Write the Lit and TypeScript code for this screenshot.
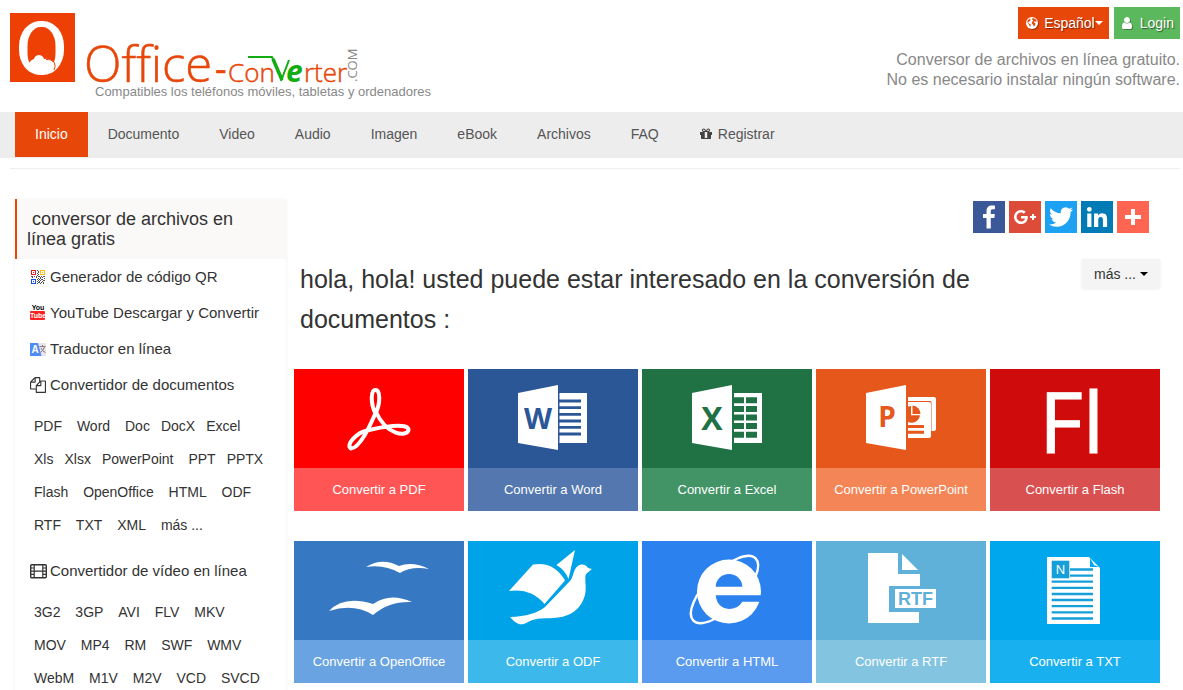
import { LitElement, html, svg, css } from "lit";
import { customElement } from "lit/decorators.js";

const doorShape = "M50 24 L90 16 V81 L50 74 Z";

const art = {
  pdf: svg`<g fill="none" stroke="#fff" stroke-linejoin="round">
      <path stroke-width="4" d="M81.500 45C76 33 77 21 81.500 21S87 33 81.500 45" />
      <path stroke-width="4" d="M82 43C76 57 66 79 57 79.500C51 76 63 63.500 73 61.500C86 58 115 53 114.500 61C113 68 93 67 82 43" />
    </g>`,
  word: svg`<path fill="#fff" d=${doorShape} /><path fill="#fff" d="M91.500 24H119V74H91.500Z" />
    <path stroke="#2b5797" stroke-width="2.800" d="M91 32H113M91 38.700H113M91 45.300H113M91 52H113M91 58.400H113M91 65H113" />
    <text class="letter" x="70" y="60" font-size="29" fill="#2b5797">W</text>`,
  excel: svg`<path fill="#fff" d=${doorShape} /><path fill="#fff" d="M92 24H120V74H92Z" />
    <path stroke="#207245" stroke-width="6" d="M92 31.300H102M104 31.300H115M92 40H102M104 40H115M92 48.500H102M104 48.500H115M92 57H102M104 57H115M92 65.700H102M104 65.700H115" />
    <text class="letter" x="70" y="61" font-size="32" fill="#207245">X</text>`,
  ppt: svg`<path fill="#fff" d=${doorShape} />
    <path fill="#fff" d="M92 28H118Q120 28 120 30V60Q120 62 118 62H115.500V33.500Q115.500 32 114 32H92Z" />
    <path fill="#fff" d="M92 33H113Q115 33 115 35V67Q115 69 113 69H92Z" />
    <path fill="#e6571b" d="M92 37.500A8.500 8.500 0 0 1 95 37V46.300H104A8.500 8.500 0 0 1 92 53Z" />
    <path fill="#e6571b" d="M96.500 36.500A8.500 8.500 0 0 1 104.500 45H96.500Z" />
    <path stroke="#e6571b" stroke-width="3" d="M92 57.500H108M92 63.200H108" />
    <text class="letter" x="71" y="58" font-size="28" fill="#e6571b">P</text>`,
  flash: svg`<text x="49" y="84" font-family="Open Sans, sans-serif" font-size="85" stroke="#fff" fill="#fff">Fl</text>`,
  oo: svg`<path fill="#fff" d="M72 26Q88 16 105 25Q119 20 135 28Q117 25 106 32Q90 23 72 26Z" />
    <path fill="#fff" d="M35 70Q50 54 79 63Q96 51 118 61Q95 60 79 74Q60 62 35 70Z" />`,
  odf: svg`<g fill="#fff"><path d="M41 50L65 23.500Q86 20 97 39.500L76.500 63Q63 47 41 50Z" />
    <path d="M88.500 24L107 9L100.500 38Q97 29 88.500 24Z" />
    <path d="M42 76Q66 75 77 66L102 40C106 36 105 25 113 23.500Q118 23 120 27L124 28L118 33C116 38 119 45 117 54C113 68 103 75 90 76.500C78 78 68 76 60 81C53 85 49 84 42 76Z" /></g>`,
  ie: svg`<circle cx="87" cy="50.500" r="32" fill="#fff" />
    <ellipse cx="82.500" cy="48.500" rx="44" ry="18" transform="rotate(-45 82.500 48.500)" fill="none" stroke="#fff" stroke-width="2.400" />
    <path fill="#2b82ee" d="M73.700 45.700A13.300 12.700 0 0 1 100.300 45.700Z" />
    <path fill="#2b82ee" d="M73.700 54.300H122V60.700H100.300Q96 68 87 68Q75 67 73.700 54.300Z" />`,
  rtf: svg`<path fill="#fff" d="M52 12H82V33H104V45H73V71H103V82H52Z" /><path fill="#fff" d="M86 13V29H102Z" />
    <path fill="#fff" d="M79 48H120V67H79Z" />
    <text x="99.500" y="64" text-anchor="middle" font-weight="700" font-size="18" font-family="Liberation Sans, sans-serif" fill="#5fb1da">RTF</text>`,
  txt: svg`<path fill="#fff" d="M57 16H99L110 27V83H57Z" /><path fill="#00a7ed" d="M100 17V26H109L104 24Z" />
    <path fill="#169fd8" d="M61.700 19.700H79.300V37.300H61.700Z" />
    <path stroke="#169fd8" stroke-width="2.300" d="M80 28.500H103M80 34.700H103M61.700 40.700H103M61.700 46.800H103M61.700 53H103M61.700 59H103M61.700 65.200H103M61.700 71.300H103M61.700 77.500H103" />
    <text x="70.500" y="33" text-anchor="middle" font-family="Liberation Sans, sans-serif" font-size="13" fill="#fff">N</text>`,
};

const tiles = [
  { name: "PDF", top: "#ff0000", foot: "#ff5555", art: art.pdf },
  { name: "Word", top: "#2b5797", foot: "#5377ae", art: art.word },
  { name: "Excel", top: "#207245", foot: "#429467", art: art.excel },
  { name: "PowerPoint", top: "#e6571b", foot: "#f48556", art: art.ppt },
  { name: "Flash", top: "#cf0b0b", foot: "#d95050", art: art.flash },
  { name: "OpenOffice", top: "#3778c2", foot: "#69a3e2", art: art.oo },
  { name: "ODF", top: "#00a3e7", foot: "#3cb8ea", art: art.odf },
  { name: "HTML", top: "#2b82ee", foot: "#5a9bf0", art: art.ie },
  { name: "RTF", top: "#5fb1da", foot: "#83c4e1", art: art.rtf },
  { name: "TXT", top: "#00a7ed", foot: "#19b0f0", art: art.txt },
];

const social = [
  { name: "Facebook", color: "#3b5998", d: "M17.78 27.5V17.008h3.522l.527-4.09h-4.05v-2.61c0-1.182.33-1.99 2.023-1.99h2.166V4.66c-.375-.05-1.66-.16-3.155-.16-3.123 0-5.26 1.905-5.26 5.405v3.016h-3.53v4.09h3.53V27.5h4.223z" },
  { name: "Google+", color: "#dd4b39", d: "M27 15h-2v-2h-2v2h-2v2h2v2h2v-2h2m-15-2v2.4h3.97c-.16 1.03-1.2 3.02-3.97 3.02-2.39 0-4.34-1.98-4.34-4.42s1.95-4.42 4.34-4.42c1.36 0 2.27.58 2.79 1.08l1.9-1.83C15.47 9.69 13.89 9 12 9c-3.87 0-7 3.13-7 7s3.13 7 7 7c4.04 0 6.72-2.84 6.72-6.84 0-.46-.05-.81-.11-1.16H12z" },
  { name: "Twitter", color: "#1da1f2", d: "M28 8.557a9.913 9.913 0 0 1-2.828.775 4.93 4.93 0 0 0 2.166-2.725 9.738 9.738 0 0 1-3.13 1.194 4.92 4.92 0 0 0-3.593-1.55 4.924 4.924 0 0 0-4.794 6.049c-4.09-.21-7.72-2.17-10.15-5.15a4.942 4.942 0 0 0-.665 2.477c0 1.71.87 3.214 2.19 4.1a4.968 4.968 0 0 1-2.23-.616v.06c0 2.39 1.7 4.38 3.952 4.83-.414.115-.85.174-1.297.174-.318 0-.626-.03-.928-.086a4.935 4.935 0 0 0 4.6 3.42 9.893 9.893 0 0 1-6.114 2.107c-.398 0-.79-.023-1.175-.068a13.953 13.953 0 0 0 7.55 2.213c9.056 0 14.01-7.507 14.01-14.013 0-.213-.005-.426-.015-.637.96-.695 1.795-1.56 2.455-2.55z" },
  { name: "LinkedIn", color: "#007bb5", d: "M6.227 12.61h4.19v13.48h-4.19V12.61zm2.095-6.7a2.43 2.43 0 0 1 0 4.86c-1.344 0-2.428-1.09-2.428-2.43s1.084-2.43 2.428-2.43m4.72 6.7h4.02v1.84h.058c.56-1.058 1.927-2.176 3.965-2.176 4.238 0 5.02 2.792 5.02 6.42v7.395h-4.183v-6.56c0-1.564-.03-3.574-2.178-3.574-2.18 0-2.514 1.7-2.514 3.46v6.668h-4.187V12.61z" },
  { name: "Compartir", color: "#ff6550", d: "M14 8h4v6h6v4h-6v6h-4v-6H8v-4h6z" },
];

const icons = {
  globe: svg`<svg class="glyph" width="12" height="12" viewBox="0 0 12 12" aria-hidden="true"><circle cx="6" cy="6" r="6" fill="#fff" />
    <path fill="#e8470a" d="M6.500 1L9 1.800L10.800 4L10 5L8.800 4.300L7.500 5L9.500 6.500L9 8.500L7.800 9.500L7 7.500L5.800 6.500L6.300 4.500L7.500 3.500L6.200 2.800ZM2 3L4 1.500L4.500 3L3.500 4.500L2 5L3 6.500L4.800 7.500L4.500 9.500L3.500 9L2.800 7L1.200 5Z" /></svg>`,
  user: svg`<svg class="glyph" width="14" height="14" viewBox="0 0 1792 1792" fill="#fff" aria-hidden="true"><path d="M1536 1399q0 109-62.5 187t-150.5 78h-854q-88 0-150.5-78t-62.5-187q0-85 8.5-160.5t31.5-152 58.5-131 94-89 134.5-34.5q131 128 313 128t313-128q76 0 134.5 34.5t94 89 58.5 131 31.5 152 8.500 160.500zm-256-887q0 159-112.500 271.500t-271.500 112.500-271.500-112.500-112.500-271.500 112.500-271.500 271.500-112.500 271.500 112.500 112.500 271.500z" /></svg>`,
  gift: svg`<svg width="14" height="14" viewBox="0 0 1792 1792" fill="#444" aria-hidden="true"><path d="M1056 1356v-716h-320v716q0 25 18 38.500t46 13.500h192q28 0 46-13.500t18-38.500zm-456-844h195l-126-161q-26-31-69-31-40 0-68 28t-28 68 28 68 68 28zm688-96q0-40-28-68t-68-28q-43 0-69 31l-125 161h194q40 0 68-28t28-68zm376 256v320q0 14-9 23t-23 9h-96v416q0 40-28 68t-68 28h-1088q-40 0-68-28t-28-68v-416h-96q-14 0-23-9t-9-23v-320q0-14 9-23t23-9h440q-93 0-158.500-65.500t-65.500-158.500 65.500-158.500 158.500-65.500q107 0 168 77l128 165 128-165q61-77 168-77 93 0 158.500 65.500t65.500 158.500-65.500 158.500-158.500 65.500h440q14 0 23 9t9 23z" /></svg>`,
  qr: svg`<svg width="16" height="16" viewBox="0 0 16 16" shape-rendering="crispEdges" aria-hidden="true">
    <path fill-rule="evenodd" fill="#e01b1b" d="M1 1h5v5h-5zM2 2v3h3v-3zM3 3h1v1h-1z" />
    <path fill-rule="evenodd" fill="#fcbf0a" d="M10 1h5v5h-5zM11 2v3h3v-3zM12 3h1v1h-1z" />
    <path fill-rule="evenodd" fill="#1553f0" d="M1 10h5v5h-5zM2 11v3h3v-3zM3 12h1v1h-1z" />
    <path fill="#555" d="M7 1h1v1h-1zM8 2h1v2h-1zM7 4h1v1h-1zM8 5h1v1h-1zM7 6h1v1h-1zM1 7h2v1h-2zM4 7h1v1h-1zM6 7h1v2h-1zM8 7h2v1h-2zM11 7h1v1h-1zM13 7h2v1h-2zM2 8h1v1h-1zM8 9h1v1h-1zM10 8h1v2h-1zM12 8h1v1h-1zM14 9h1v1h-1zM7 10h1v1h-1zM9 10h1v1h-1zM11 10h2v1h-2zM8 11h1v1h-1zM10 11h1v1h-1zM13 11h2v1h-2zM7 12h1v1h-1zM9 12h1v1h-1zM12 12h1v1h-1zM8 13h2v1h-2zM11 13h1v1h-1zM13 13h1v2h-1zM7 14h1v1h-1zM10 14h1v1h-1z" /></svg>`,
  youtube: svg`<svg width="16" height="16" viewBox="0 0 16 16" aria-hidden="true">
    <path fill="#f22" d="M0 7Q0 6 1 6H14Q15 6 15 7V14Q15 15 14 15H1Q0 15 0 14Z" />
    <text x="8" y="5" text-anchor="middle" font-family="Liberation Sans, sans-serif" font-weight="700" font-size="7" fill="#000">You</text>
    <text x="8" y="13" text-anchor="middle" font-family="Liberation Sans, sans-serif" font-weight="700" font-size="7" fill="#fff">Tube</text></svg>`,
  translate: svg`<svg width="16" height="16" viewBox="0 0 16 16" aria-hidden="true">
    <path fill="#e6e6ea" d="M7 2H16V15H10Z" /><path fill="#4d8bf5" d="M0 2H8L11.500 15H0Z" />
    <text x="5" y="12" text-anchor="middle" font-family="Liberation Sans, sans-serif" font-weight="700" font-size="10" fill="#fff">A</text>
    <path fill="none" stroke="#8c7a80" d="M9.500 5.500H15.500M12.500 4V5.500M14.500 6Q13 10 10.500 11.500M11 7Q12.500 10.500 15.500 11.500" /></svg>`,
  files: svg`<svg width="16" height="16" viewBox="0 0 1792 1792" fill="#333" aria-hidden="true"><path d="M1696 384q40 0 68 28t28 68v1216q0 40-28 68t-68 28h-960q-40 0-68-28t-28-68v-288h-544q-40 0-68-28t-28-68v-672q0-40 20-88t48-76l408-408q28-28 76-48t88-20h416q40 0 68 28t28 68v328q68-40 128-40h416zm-544 213l-299 299h299v-299zm-640-384l-299 299h299v-299zm196 647l316-316v-416h-384v416q0 40-28 68t-68 28h-416v640h512v-256q0-40 20-88t48-76zm956 804v-1152h-384v416q0 40-28 68t-68 28h-416v640h896z" /></svg>`,
  film: svg`<svg class="wide" width="17" height="16" viewBox="0 0 17 16" fill="none" stroke="#333" aria-hidden="true">
    <rect x="0.700" y="1.700" width="15.600" height="13" rx="1" stroke-width="1.400" />
    <path stroke-width="1.200" d="M4.200 2V14.500M12.800 2V14.500M4.200 8.200H12.800M1 5H4M1 8.200H4M1 11.400H4M13 5H16M13 8.200H16M13 11.400H16" /></svg>`,
};

// A trailing space adds a word gap after the tag.
const documentTags = ["PDF ", "Word ", "Doc", "DocX", "Excel ", "Xls", "Xlsx", "PowerPoint ", "PPT", "PPTX ", "Flash ", "OpenOffice ", "HTML ", "ODF ", "RTF ", "TXT ", "XML ", "más ... "];
const videoTags = ["3G2 ", "3GP ", "AVI ", "FLV ", "MKV ", "MOV ", "MP4 ", "RM ", "SWF ", "WMV ", "WebM ", "M1V ", "M2V ", "VCD ", "SVCD "];

@customElement("app-root")
export class AppRoot extends LitElement {
  static styles = css`
    :host {
      display: block;
      height: 100vh;
      overflow: hidden;
      background: #fff;
      color: #333;
      font: 14px/20px "Liberation Sans", Arial, sans-serif;
    }
    a { color: inherit; text-decoration: none; }
    svg { display: block; flex: none; overflow: visible; }
    button { font: inherit; border: 0; margin: 0; cursor: pointer; }
    .header {
      display: flex;
      justify-content: space-between;
      box-sizing: border-box;
      min-height: 112px;
      padding: 7px 3px 0 10px;
    }
    .brand { padding-top: 6px; }
    .tagline { margin: 0 0 0 85px; font-size: 13px; line-height: 18px; color: #888; }
    .account { text-align: right; }
    .actions { display: flex; justify-content: flex-end; gap: 5px; margin-bottom: 11px; }
    .action {
      display: flex;
      align-items: center;
      height: 32px;
      padding: 0 6px;
      color: #fff;
      text-shadow: 1px 1px 1px rgba(0, 0, 0, 0.5);
    }
    .glyph { margin-right: 6px; filter: drop-shadow(1px 1px 0 rgba(0, 0, 0, 0.3)); }
    .language { background: #e8470a; padding-left: 8px; }
    .login { background: #5cb85c; }
    .caret { border: 4px solid transparent; border-top-color: currentColor; border-bottom: 0; }
    .pitch { margin: 0; font-size: 16px; color: #888; }
    .nav { display: flex; flex-wrap: wrap; min-height: 46px; padding-left: 15px; box-sizing: border-box; background: #ededed; color: #555; }
    .nav-link { display: flex; align-items: center; gap: 5px; box-sizing: border-box; height: 45px; padding: 0 20px 2px; }
    .active { background: #e8470a; color: #fff; }
    .rule { border: 0; border-top: 1px solid #eee; margin: 10px 3px 30px 10px; }
    .layout { display: flex; gap: 8px; padding: 0 23px 0 15px; }
    .side { flex: none; width: 271px; box-sizing: border-box; box-shadow: 0 1px 3px rgba(0, 0, 0, 0.08); }
    .side-title {
      margin: 0;
      padding: 10px;
      border-left: 2px solid #e8470a;
      background: #faf9f8;
      font-size: 18px;
      font-weight: 400;
    }
    .side-link { display: flex; align-items: center; gap: 4px; height: 36px; padding-left: 15px; font-size: 15px; }
    .wide { margin-right: -1px; }
    .tags { margin: 7px 6px 11px 19px; line-height: 33px; }
    .tag { display: inline-block; margin-right: 11px; }
    .main { flex: 1; min-width: 0; }
    .social { display: flex; justify-content: flex-end; gap: 4px; padding: 2px 11px 0 0; }
    .intro { display: flex; justify-content: space-between; align-items: flex-start; margin: 26px 0 30px 6px; }
    .question { margin: 0; max-width: 720px; font-size: 25px; line-height: 40px; font-weight: 400; }
    .more {
      display: flex;
      align-items: center;
      gap: 4px;
      height: 29px;
      padding: 0 12px;
      background: #f4f4f4;
      color: #333;
      box-shadow: 0 1px 3px rgba(0, 0, 0, 0.08);
    }
    .dark { color: #000; }
    .tiles { display: grid; grid-template-columns: repeat(5, 1fr); gap: 30px 4px; }
    .tile { display: block; color: #fff; font-size: 13px; text-align: center; }
    .picture { display: flex; justify-content: center; }
    .caption { display: block; line-height: 43px; }
    .letter { font-family: "Open Sans", sans-serif; font-weight: 700; text-anchor: middle; }
  `;

  private renderLogo() {
    return html`<svg width="350" height="70" viewBox="0 0 350 70" role="img" aria-label="Office-Converter.com">
      <rect width="65" height="69" fill="#ee3f05" />
      <rect x="9" y="8" width="45" height="54" rx="21" ry="25" fill="#fff" />
      <rect x="17.500" y="14" width="28" height="45" rx="13" ry="19" fill="#ee3f05" />
      <path fill="#fff" d="M17 50Q20 50 21 47.500Q23 46 24 46Q25 42 29.500 42Q33 42.500 34 46Q40 45 43 49L46 51L42 60H22Z" />
      <path fill="none" stroke="#ee3f05" d="M36 46.500Q42 46 44.500 50Q46 53 44 57" />
      <g font-family="Open Sans, sans-serif" font-weight="300" fill="#e8470a" stroke="#e8470a" stroke-width="0.500">
        <text x="74" y="69" font-size="49">Office</text>
        <text x="205" y="69" font-size="36" font-weight="400">-</text>
        <text x="218" y="69" font-size="26">Con</text>
        <text x="294" y="69" font-size="26">rter</text>
      </g>
      <path fill="none" stroke="#12ad12" stroke-width="2" d="M238 44H262L272 67" />
      <path fill="none" stroke="#12ad12" stroke-width="3.500" d="M263 46L272 67" />
      <path fill="none" stroke="#12ad12" stroke-width="2" d="M271 68L279 47" />
      <text x="276" y="69" font-size="30" font-family="Open Sans, sans-serif" font-weight="700" font-style="italic" fill="#12ad12">e</text>
      <text transform="rotate(-90 347 69)" x="347" y="69" font-size="13" font-family="Open Sans, sans-serif" fill="#888">.COM</text>
    </svg>`;
  }

  private renderTags(tags: string[]) {
    return html`<div class="tags">${tags.map((tag) => html`<a class="tag" href="#">${tag.trim()}</a>${tag.endsWith(" ") ? " " : ""}`)}</div>`;
  }

  render() {
    const menu = ["Documento", "Video", "Audio", "Imagen", "eBook", "Archivos", "FAQ"];
    return html`
      <header class="header">
        <div class="brand">
          <a href="#">${this.renderLogo()}</a>
          <p class="tagline">Compatibles los teléfonos móviles, tabletas y ordenadores</p>
        </div>
        <div class="account">
          <div class="actions">
            <button class="action language">${icons.globe}Español<span class="caret"></span></button>
            <button class="action login">${icons.user}Login</button>
          </div>
          <p class="pitch">Conversor de archivos en línea gratuito.<br />No es necesario instalar ningún software.</p>
        </div>
      </header>
      <nav class="nav">
        <a class="nav-link active" href="#">Inicio</a>
        ${menu.map((item) => html`<a class="nav-link" href="#">${item}</a>`)}
        <a class="nav-link" href="#">${icons.gift}Registrar</a>
      </nav>
      <hr class="rule" />
      <div class="layout">
        <aside class="side">
          <h2 class="side-title">&nbsp;conversor de archivos en línea gratis</h2>
          <a class="side-link" href="#">${icons.qr}Generador de código QR</a>
          <a class="side-link" href="#">${icons.youtube}YouTube Descargar y Convertir</a>
          <a class="side-link" href="#">${icons.translate}Traductor en línea</a>
          <a class="side-link" href="#">${icons.files}Convertidor de documentos</a>
          ${this.renderTags(documentTags)}
          <a class="side-link" href="#">${icons.film}Convertidor de vídeo en línea</a>
          ${this.renderTags(videoTags)}
        </aside>
        <main class="main">
          <div class="social">
            ${social.map(
              (s) => html`<a href="#" aria-label=${s.name}><svg width="32" height="32" viewBox="0 0 32 32"><rect width="32" height="32" fill=${s.color} /><path fill="#fff" d=${s.d} /></svg></a>`
            )}
          </div>
          <div class="intro">
            <h1 class="question">hola, hola! usted puede estar interesado en la conversión de documentos :</h1>
            <button class="more">más ... <span class="caret dark"></span></button>
          </div>
          <div class="tiles">
            ${tiles.map(
              (t) => html`<a class="tile" href="#">
                <span class="picture" style="background:${t.top}"><svg width="170" height="99" viewBox="0 0 170 99" aria-hidden="true">${t.art}</svg></span>
                <span class="caption" style="background:${t.foot}">Convertir a ${t.name}</span>
              </a>`
            )}
          </div>
        </main>
      </div>
    `;
  }
}
